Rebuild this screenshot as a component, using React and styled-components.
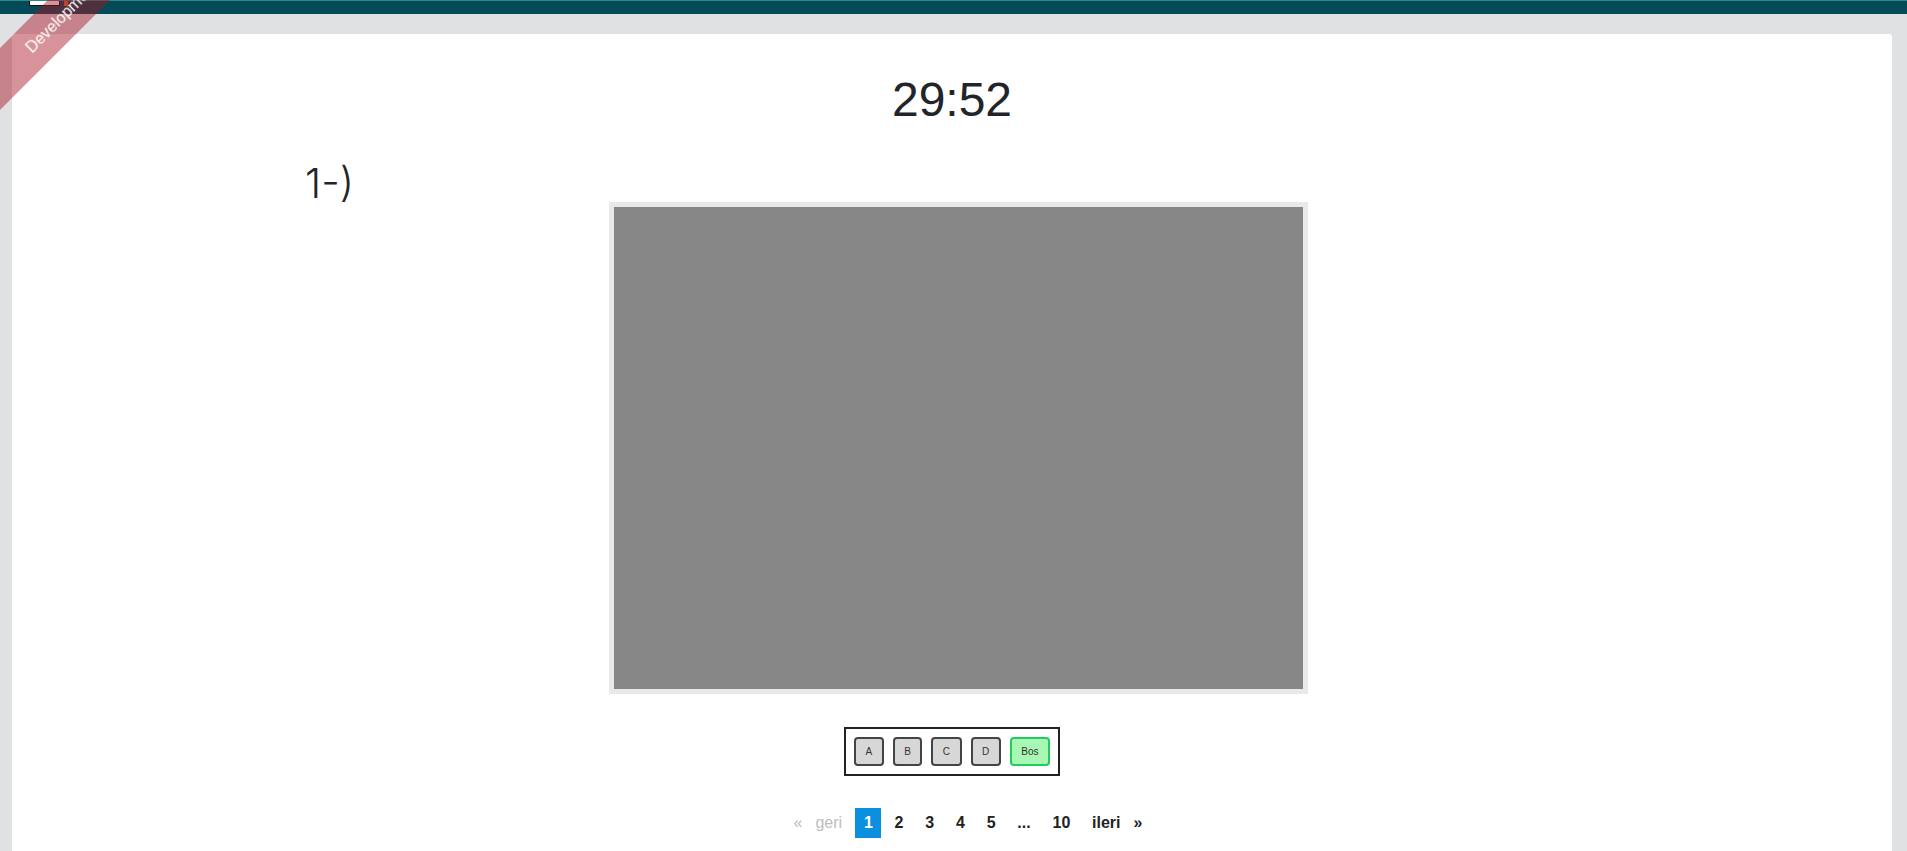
import styled, { createGlobalStyle } from "styled-components";

const GlobalStyle = createGlobalStyle`
  html, body {
    margin: 0;
    padding: 0;
  }
  body {
    background: #e0e1e3;
    font-family: "Liberation Sans", Arial, sans-serif;
    color: #212529;
  }
  * {
    box-sizing: border-box;
  }
`;

const Page = styled.div`
  min-height: 100vh;
  background: #e0e1e3;
`;

const TopBar = styled.div`
  height: 14px;
  background: #044a59;
  border-top: 1px solid #2e8a7b;
  display: flex;
  align-items: flex-end;
  padding-left: 29px;
`;

const Logo = styled.div`
  display: flex;
  align-items: flex-end;
  gap: 4px;
  height: 5px;
  margin-bottom: 8px;
`;

const LogoBox = styled.div`
  width: 31px;
  height: 5px;
  background: #fff;
  border: 1.5px solid #2a0a0c;
  border-top: none;
`;

const LogoMark = styled.div`
  width: 4px;
  height: 5px;
  background: #e06a1c;
`;

const Ribbon = styled.div`
  position: fixed;
  left: -48px;
  top: -5px;
  width: 220px;
  height: 44px;
  line-height: 44px;
  transform: rotate(-45deg);
  background: rgba(168, 16, 32, 0.45);
  color: #fff;
  font-size: 16px;
  text-align: center;
  z-index: 10;
`;

const Main = styled.div`
  padding: 20px 15px 0 12px;
`;

const Panel = styled.div`
  background: #fff;
  border-radius: 3px 3px 0 0;
  padding: 42px 0 60px;
  min-height: 900px;
`;

const Timer = styled.div`
  text-align: center;
  font-size: 48px;
  line-height: 48px;
  margin-bottom: 41px;
`;

const Container = styled.div`
  max-width: 1320px;
  margin: 0 auto;
  padding: 0 12px;
  display: flex;
  flex-direction: column;
`;

const QuestionNo = styled.div`
  font-family: Inter, Roboto, sans-serif;
  font-weight: 300;
  font-size: 41px;
  line-height: 37px;
  margin-left: 1px;
`;

const ImageRow = styled.div`
  display: flex;
  justify-content: center;
  padding-left: 13px;
`;

const ImageFrame = styled.div`
  width: 699px;
  height: 492px;
  border: 5px solid #e9e9e9;
  background: #878787;
`;

const AnswerBox = styled.div`
  align-self: center;
  display: flex;
  gap: 9px;
  margin-top: 33px;
  padding: 8px;
  border: 2px solid #222;
`;

const AnswerButton = styled.button`
  height: 29px;
  padding: 0 9.5px;
  font-family: "Liberation Sans", Arial, sans-serif;
  font-size: 10px;
  color: #333;
  border-radius: 4px;
  border: 2px solid ${(p) => (p.$empty ? "#1fcd5a" : "#444")};
  background: ${(p) => (p.$empty ? "#a9f7b4" : "#d7d7d7")};
  cursor: pointer;
`;

const Pager = styled.ul`
  display: flex;
  justify-content: center;
  list-style: none;
  margin: 32px 0 0;
  padding: 0 0 0 32px;
`;

const PageItem = styled.li`
  display: flex;
  align-items: center;
  gap: 13px;
  height: 30px;
  padding: 0 8.5px;
  margin: 0 2.4px;
  font-size: 16px;
  color: ${(p) => (p.$active ? "#fff" : p.$disabled ? "#bdbdbd" : "#222")};
  background: ${(p) => (p.$active ? "#0b8fdf" : "transparent")};
  font-weight: ${(p) => (p.$disabled ? 400 : 700)};
  cursor: ${(p) => (p.$disabled ? "default" : "pointer")};
`;

const answers = ["A", "B", "C", "D"];
const pages = ["1", "2", "3", "4", "5", "...", "10"];

function App() {
  return (
    <Page>
      <GlobalStyle />
      <Ribbon>Development</Ribbon>
      <TopBar>
        <Logo>
          <LogoBox />
          <LogoMark />
        </Logo>
      </TopBar>
      <Main>
        <Panel>
          <Timer>29:52</Timer>
          <Container>
            <QuestionNo>1-)</QuestionNo>
            <ImageRow>
              <ImageFrame />
            </ImageRow>
            <AnswerBox>
              {answers.map((a) => (
                <AnswerButton key={a}>{a}</AnswerButton>
              ))}
              <AnswerButton $empty>Bos</AnswerButton>
            </AnswerBox>
            <Pager>
              <PageItem $disabled>
                <span>«</span>
                <span>geri</span>
              </PageItem>
              {pages.map((p, i) => (
                <PageItem key={p} $active={i === 0}>
                  {p}
                </PageItem>
              ))}
              <PageItem>
                <span>ileri</span>
                <span>»</span>
              </PageItem>
            </Pager>
          </Container>
        </Panel>
      </Main>
    </Page>
  );
}

export default App;
